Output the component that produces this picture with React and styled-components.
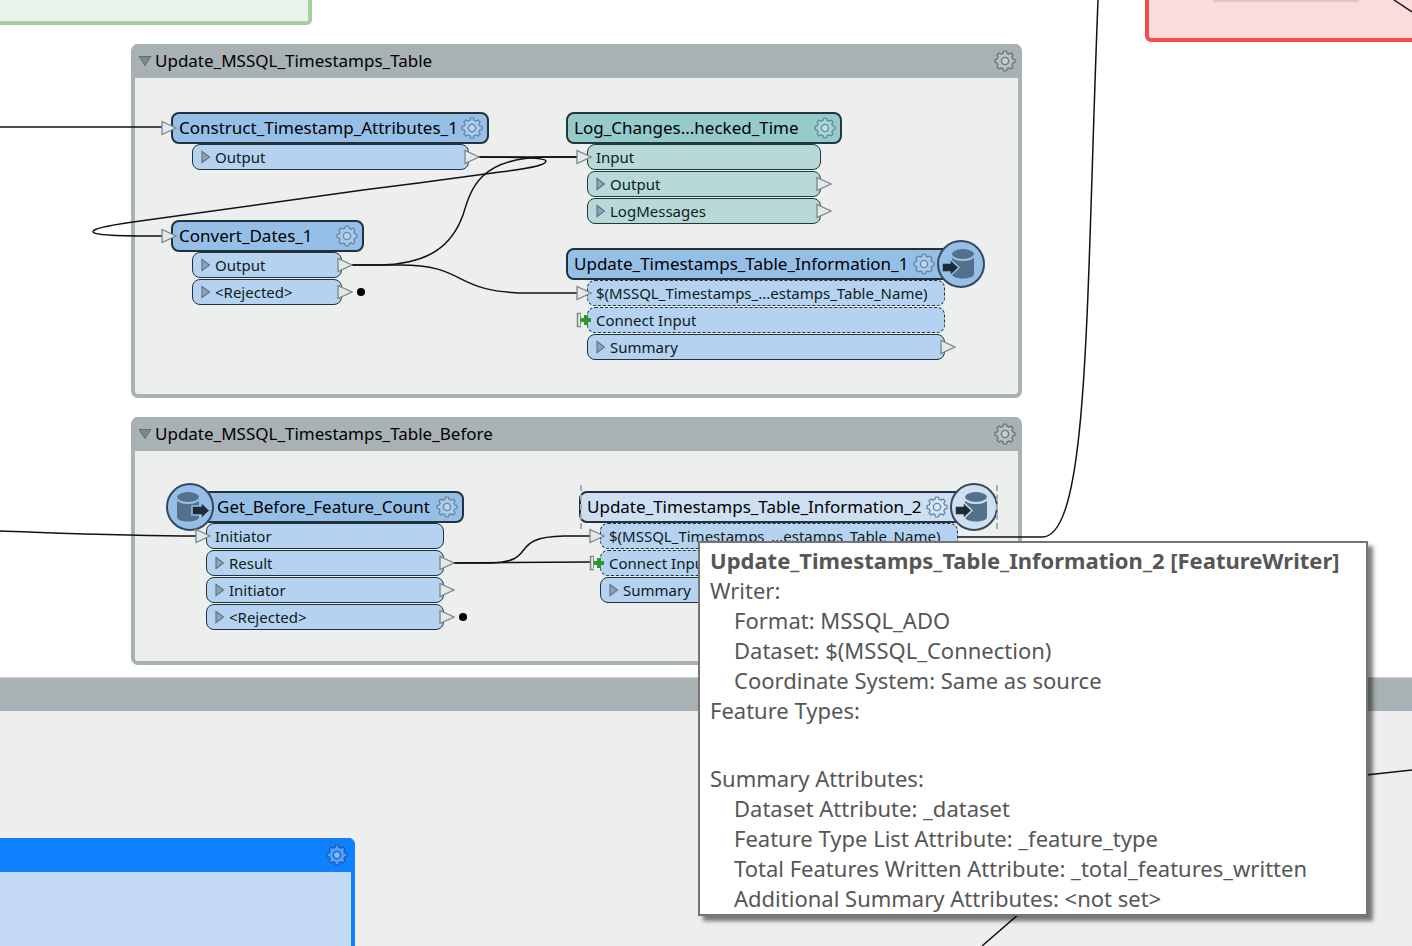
import React from "react";
import styled, { createGlobalStyle } from "styled-components";

const GlobalStyle = createGlobalStyle`
  * { box-sizing: border-box; }
  body { margin: 0; background: #fff; }
  h2, h3, p { margin: 0; font-weight: normal; }
`;

const blue = { head: "#96bfe8", row: "#b5d3f0", line: "#22323d", text: "#101a22" };
const teal = { head: "#96cbcb", row: "#b7dad8", line: "#22383b", text: "#101a22" };
const selected = { ...blue, head: "#cddff1" };

const nodes = [
  {
    title: "Construct_Timestamp_Attributes_1", x: 171, y: 112, width: 318, indent: 21, rowWidth: 277, input: true, colors: blue,
    ports: [{ label: "Output", out: true }],
  },
  {
    title: "Convert_Dates_1", x: 171, y: 220, width: 193, indent: 21, rowWidth: 150, input: true, colors: blue,
    ports: [{ label: "Output", out: true }, { label: "<Rejected>", out: true, stop: true }],
  },
  {
    title: "Log_Changes...hecked_Time", x: 566, y: 112, width: 276, indent: 21, rowWidth: 234, colors: teal,
    ports: [{ label: "Input", in: true }, { label: "Output", out: true }, { label: "LogMessages", out: true }],
  },
  {
    title: "Update_Timestamps_Table_Information_1", x: 566, y: 248, width: 396, indent: 21, rowWidth: 358, badge: "writer", colors: blue,
    ports: [
      { label: "$(MSSQL_Timestamps_...estamps_Table_Name)", in: true, dashed: true },
      { label: "Connect Input", plus: true, dashed: true },
      { label: "Summary", out: true },
    ],
  },
  {
    title: "Get_Before_Feature_Count", x: 190, y: 491, width: 274, indent: 16, rowWidth: 238, badge: "reader", colors: blue,
    ports: [{ label: "Initiator", in: true }, { label: "Result", out: true }, { label: "Initiator", out: true }, { label: "<Rejected>", out: true, stop: true }],
  },
  {
    title: "Update_Timestamps_Table_Information_2", x: 579, y: 491, width: 396, indent: 21, rowWidth: 358, badge: "writer", colors: selected, marked: true,
    ports: [
      { label: "$(MSSQL_Timestamps_...estamps_Table_Name)", in: true, dashed: true },
      { label: "Connect Input", plus: true, dashed: true },
      { label: "Summary", out: true },
    ],
  },
];

const wires = [
  "M0 127H162",
  "M478 157H577",
  "M478 157C530 157 546 158 546 161C546 166 524 169 500 172C450 179 410 184 363 190C280 201 200 212 133 222C105 226 92 229 93 232C95 236 130 236 162 236",
  "M352 265H380C430 264 452 245 463 215C471 188 480 158 545 157H577",
  "M352 265H400C470 265 450 293 530 293H577",
  "M0 531C60 533 130 536 196 536",
  "M453 563H490C540 562 506 537 564 536H590",
  "M453 563L590 562",
  "M958 537H1042C1090 537 1086 300 1098 0",
  "M1020 913L982 946",
  "M1366 775L1412 770",
  "M1394 0L1412 12",
];

const gearPath = () => {
  const points = [];
  for (let i = 0; i < 8; i++) {
    const spots = [[-15, 8], [-8, 10], [8, 10], [15, 8]];
    spots.forEach(([deg, r]) => {
      const a = ((i * 45 + deg) * Math.PI) / 180;
      points.push(`${(11 + r * Math.sin(a)).toFixed(2)} ${(11 - r * Math.cos(a)).toFixed(2)}`);
    });
  }
  return `M${points.join("L")}Z`;
};

const Gear = ({ color, fill }) => (
  <svg width="22" height="22" viewBox="0 0 22 22" fill={fill} stroke={color} strokeWidth="1.4">
    <path d={gearPath()} strokeLinejoin="round" />
    <circle cx="11" cy="11" r="3.6" />
  </svg>
);

const Triangle = () => (
  <svg width="10" height="14" viewBox="0 0 10 14">
    <path d="M1 1.5V12.5L8.5 7Z" fill="#8ba5b8" stroke="#607684" strokeWidth="1.2" />
  </svg>
);

const Plug = () => (
  <svg width="16" height="16" viewBox="0 0 16 16">
    <path d="M1 1.5V14.5L15 8Z" fill="#e3e8e8" stroke="#7b8588" strokeWidth="1.3" />
  </svg>
);

const PlusPlug = () => (
  <svg width="16" height="16" viewBox="0 0 16 16">
    <path d="M5 1.500H1.500V14.500H5" fill="none" stroke="#7b8588" strokeWidth="1.5" />
    <path d="M4.500 3V13" fill="none" stroke="#7b8588" />
    <path d="M10 3V13M5 8H15" stroke="#2a9a2c" strokeWidth="4" />
  </svg>
);

const Database = ({ kind, fill }) => (
  <svg width="50" height="50" viewBox="0 0 50 50">
    <circle cx="25" cy="25" r="23" fill={fill} stroke="#34495c" strokeWidth="2" />
    <g transform={kind === "reader" ? "translate(-4 0)" : "translate(0 0)"}>
      <path d="M16 16V35C16 41 38 41 38 35V16Z" fill="#54718b" />
      <ellipse cx="27" cy="15" rx="12" ry="6" fill="#54718b" stroke={fill} strokeWidth="2" />
    </g>
    {kind === "reader" ? (
      <path d="M27 24H36V20L45 28.500L36 37V33H27Z" fill="#1d2c35" stroke={fill} strokeWidth="1.5" />
    ) : (
      <path d="M6 24H14V20L23 28.500L14 37V33H6Z" fill="#1d2c35" stroke={fill} strokeWidth="1.5" />
    )}
  </svg>
);

const Port = ({ port, colors, width }) => (
  <Row $colors={colors} $width={width} $dashed={port.dashed}>
    {port.in && <InSlot><Plug /></InSlot>}
    {port.plus && <InSlot><PlusPlug /></InSlot>}
    {port.out && <IconButton aria-label={`Expand ${port.label}`}><Triangle /></IconButton>}
    <span>{port.label}</span>
    {port.out && <OutSlot><Plug />{port.stop && <Dot />}</OutSlot>}
  </Row>
);

const Node = ({ node }) => (
  <NodeBox $x={node.x} $y={node.y}>
    <NodeHead $colors={node.colors} $width={node.width} $badge={node.badge}>
      {node.input && <InSlot><Plug /></InSlot>}
      <NodeTitle>{node.title}</NodeTitle>
      <IconButton aria-label={`${node.title} parameters`}>
        <Gear color="#6789a5" fill="#ffffff33" />
      </IconButton>
      {node.badge && <Badge $kind={node.badge}><Database kind={node.badge} fill={node.colors.head} /></Badge>}
      {node.marked && <Marks />}
    </NodeHead>
    <Rows $indent={node.indent}>
      {node.ports.map((port, i) => (
        <Port key={i} port={port} colors={node.colors} width={node.rowWidth} />
      ))}
    </Rows>
  </NodeBox>
);

const Group = ({ title, y, height }) => (
  <GroupBox $y={y} $height={height}>
    <GroupHead>
      <IconButton aria-label={`Collapse ${title}`}>
        <svg width="14" height="12" viewBox="0 0 14 12">
          <path d="M1 1.500H13L7 10.500Z" fill="#7d888b" stroke="#616c70" />
        </svg>
      </IconButton>
      <GroupTitle>{title}</GroupTitle>
      <IconButton aria-label={`${title} properties`}><Gear color="#6d7679" fill="#ffffff33" /></IconButton>
    </GroupHead>
  </GroupBox>
);

const App = () => {
  return (
    <Canvas>
      <GlobalStyle />
      <GreenBox />
      <RedBox><RedNode /></RedBox>
      <WideGroup><WideHead /></WideGroup>
      <BlueGroup>
        <BlueHead>
          <IconButton aria-label="Bookmark properties"><Gear color="#1c5fae" fill="#ffffff44" /></IconButton>
        </BlueHead>
      </BlueGroup>
      <Group title="Update_MSSQL_Timestamps_Table" y={44} height={354} />
      <Group title="Update_MSSQL_Timestamps_Table_Before" y={417} height={248} />
      <Wires>
        {wires.map((d) => (
          <path key={d} d={d} />
        ))}
      </Wires>
      {nodes.map((node) => (
        <Node key={node.title} node={node} />
      ))}
      <Tooltip role="tooltip">
        <TipTitle>Update_Timestamps_Table_Information_2 [FeatureWriter]</TipTitle>
        <p>Writer:</p>
        <TipItem>Format: MSSQL_ADO</TipItem>
        <TipItem>Dataset: $(MSSQL_Connection)</TipItem>
        <TipItem>Coordinate System: Same as source</TipItem>
        <p>Feature Types:</p>
        <TipSection>Summary Attributes:</TipSection>
        <TipItem>Dataset Attribute: _dataset</TipItem>
        <TipItem>Feature Type List Attribute: _feature_type</TipItem>
        <TipItem>Total Features Written Attribute: _total_features_written</TipItem>
        <TipItem>Additional Summary Attributes: &lt;not set&gt;</TipItem>
      </Tooltip>
    </Canvas>
  );
};

const Canvas = styled.main`
  position: relative;
  height: 100vh;
  overflow: hidden;
  background: #fff;
  font-family: "Noto Sans", "Open Sans", sans-serif;
`;

const IconButton = styled.button`
  display: flex;
  flex: none;
  padding: 0;
  border: 0;
  background: none;
  cursor: pointer;
`;

const GreenBox = styled.section`
  position: absolute;
  left: -8px;
  top: -8px;
  width: 320px;
  height: 33px;
  background: #eaf4ea;
  border: 4px solid #a3d09b;
  border-radius: 5px;
`;

const RedBox = styled.section`
  position: absolute;
  left: 1145px;
  right: -8px;
  top: -8px;
  height: 50px;
  padding: 8px 64px;
  background: #fcdcda;
  border: 4px solid #f44e4c;
  border-radius: 6px;
`;

const RedNode = styled.div`
  width: 146px;
  height: 2px;
  margin-top: -4px;
  background: #e0c5c5;
`;

const WideGroup = styled.section`
  position: absolute;
  left: 0;
  right: 0;
  top: 677px;
  bottom: 0;
  background: #edefee;
`;

const WideHead = styled.header`
  height: 34px;
  background: #a8b1b3;
  border-top: 1px solid #ccd2d2;
`;

const BlueGroup = styled.section`
  position: absolute;
  left: -8px;
  top: 838px;
  bottom: -8px;
  width: 363px;
  background: #c4d9f3;
  border: 4px solid #0f80ff;
  border-top: 0;
  border-radius: 6px;
`;

const BlueHead = styled.header`
  display: flex;
  align-items: center;
  justify-content: flex-end;
  height: 34px;
  padding-right: 3px;
  background: #0f80ff;
`;

const GroupBox = styled.section`
  position: absolute;
  left: 131px;
  top: ${(props) => props.$y}px;
  width: 891px;
  height: ${(props) => props.$height}px;
  background: #edefee;
  border: 4px solid #a8b2b3;
  border-top: 0;
  border-radius: 7px;
`;

const GroupHead = styled.header`
  display: flex;
  align-items: center;
  height: 34px;
  padding: 0 2px 0 3px;
  background: #a8b1b3;
`;

const GroupTitle = styled.h2`
  flex: 1;
  margin-left: 3px;
  font-size: 17px;
  line-height: 24px;
  white-space: nowrap;
`;

const Wires = styled.svg`
  position: absolute;
  inset: 0;
  width: 100%;
  height: 100%;
  fill: none;
  stroke: #111;
  stroke-width: 1.5;
`;

const NodeBox = styled.article`
  position: absolute;
  left: ${(props) => props.$x}px;
  top: ${(props) => props.$y}px;
`;

const NodeHead = styled.header`
  position: relative;
  display: flex;
  align-items: center;
  justify-content: space-between;
  width: ${(props) => props.$width}px;
  height: 32px;
  padding-bottom: 1px;
  padding-left: ${(props) => (props.$badge === "reader" ? 25 : 6)}px;
  padding-right: ${(props) => (props.$badge === "writer" ? 25 : 4)}px;
  background: ${(props) => props.$colors.head};
  border: 2px solid ${(props) => props.$colors.line};
  border-radius: 8px;
`;

const NodeTitle = styled.h3`
  font-size: 17px;
  line-height: 24px;
  white-space: nowrap;
`;

const Rows = styled.div`
  display: flex;
  flex-direction: column;
  gap: 1px;
  margin-left: ${(props) => props.$indent}px;
`;

const Row = styled.div`
  position: relative;
  display: flex;
  align-items: center;
  gap: 4px;
  width: ${(props) => props.$width}px;
  height: 26px;
  padding-left: 8px;
  background: ${(props) => props.$colors.row};
  border: 1px ${(props) => (props.$dashed ? "dashed" : "solid")} ${(props) => props.$colors.line};
  border-radius: 8px;
  color: ${(props) => props.$colors.text};
  font-size: 15px;
  line-height: 20px;
  white-space: nowrap;
`;

const InSlot = styled.span`
  position: absolute;
  left: -12px;
  display: flex;
`;

const OutSlot = styled.span`
  position: absolute;
  left: calc(100% - 4px);
  display: flex;
  align-items: center;
  gap: 4px;
`;

const Dot = styled.i`
  width: 8px;
  height: 8px;
  background: #000;
  border-radius: 50%;
`;

const Badge = styled.span`
  position: absolute;
  left: ${(props) => (props.$kind === "reader" ? "-27px" : "auto")};
  right: ${(props) => (props.$kind === "writer" ? "-26px" : "auto")};
  display: flex;
`;

/* dashed selection marks left and right of the node */
const Marks = styled.i`
  position: absolute;
  left: -1px;
  right: -25px;
  top: -8px;
  bottom: -8px;
  border: dashed #a9adae;
  border-width: 0 2px;
`;

const Tooltip = styled.aside`
  position: absolute;
  left: 698px;
  top: 541px;
  min-width: 670px;
  padding: 2px 10px 1px;
  background: #fff;
  border: 2px solid #757575;
  box-shadow: 5px 5px 4px rgba(0, 0, 0, 0.5);
  color: #565656;
  font-size: 22px;
  line-height: 30px;
  white-space: nowrap;
`;

const TipTitle = styled.h3`
  font-size: 22px;
  font-weight: bold;
`;

const TipItem = styled.p`
  padding-left: 24px;
`;

const TipSection = styled.p`
  margin-top: 38px;
`;

export default App;
